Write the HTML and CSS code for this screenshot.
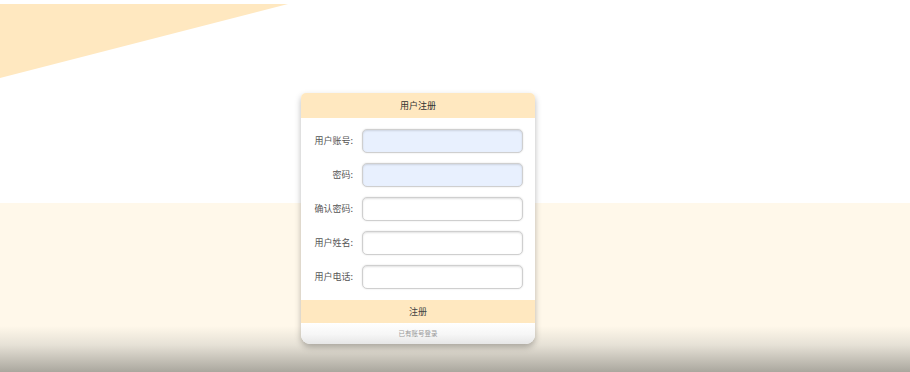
FILE: index.html
```html
<!DOCTYPE html>
<html lang="zh">
<head>
<meta charset="utf-8">
<title>用户注册</title>
<link rel="stylesheet" href="styles.css">
</head>
<body>
<div class="wedge"></div>
<div class="card">
  <div class="card-head">用户注册</div>
  <form class="card-body">
    <div class="row"><label class="lbl">用户账号:</label><input class="field filled" type="text"></div>
    <div class="row"><label class="lbl">密码:</label><input class="field filled" type="password"></div>
    <div class="row"><label class="lbl">确认密码:</label><input class="field" type="password"></div>
    <div class="row"><label class="lbl">用户姓名:</label><input class="field" type="text"></div>
    <div class="row"><label class="lbl">用户电话:</label><input class="field" type="text"></div>
  </form>
  <div class="submit">注册</div>
  <div class="foot">已有账号登录</div>
</div>
</body>
</html>
```
FILE: styles.css
```css
html, body {
  margin: 0;
  padding: 0;
  height: 372px;
  overflow: hidden;
}
body {
  font-family: "Noto Sans CJK SC", "Liberation Sans", sans-serif;
  background: linear-gradient(to bottom, #ffffff 0, #ffffff 203px, #fff8ea 203px, #fff8ea 326px, #e6e1d6 345px, #aaa79e 372px);
}
.wedge {
  margin-top: 4px;
  width: 288px;
  height: 74px;
  background: #ffe8c0;
  clip-path: polygon(0 0, 100% 0, 0 100%);
}
.card {
  margin: 15px 0 0 301px;
  width: 234px;
  background: #fff;
  border-radius: 5px 5px 9px 9px;
  box-shadow: 0 3px 6px rgba(0, 0, 0, 0.28);
}
.card-head {
  height: 25px;
  line-height: 25px;
  background: #ffe8c0;
  border-radius: 5px 5px 0 0;
  text-align: center;
  font-size: 9px;
  color: #333;
}
.card-body {
  margin: 0;
  padding: 11px 12px 11px 0;
  display: flex;
  flex-direction: column;
  gap: 10px;
}
.row {
  display: flex;
  align-items: center;
  gap: 9px;
}
.lbl {
  width: 52px;
  text-align: right;
  font-size: 9px;
  color: #555;
  line-height: 12px;
}
.field {
  box-sizing: border-box;
  width: 161px;
  height: 24px;
  margin: 0;
  border: 1px solid #cfcfcf;
  border-radius: 5px;
  background: #fff;
  box-shadow: inset 0 1px 2px rgba(0, 0, 0, 0.12), 0 0 2px rgba(0, 0, 0, 0.12);
  outline: none;
}
.field.filled {
  background: #e8f0fe;
}
.submit {
  height: 23px;
  line-height: 23px;
  background: #ffe8c0;
  text-align: center;
  font-size: 9px;
  color: #444;
}
.foot {
  height: 21px;
  line-height: 21px;
  text-align: center;
  font-size: 6.5px;
  color: #999;
  border-radius: 0 0 9px 9px;
  background: linear-gradient(to bottom, #ffffff 0, #f6f6f6 55%, #e6e6e6 100%);
}
```
